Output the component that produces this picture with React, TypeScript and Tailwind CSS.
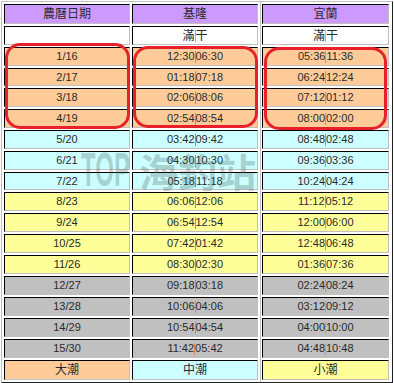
import React from 'react';

type Tone = 'head' | 'white' | 'big' | 'mid' | 'small' | 'dead';

const bg: Record<Tone, string> = {
  head: 'bg-[#cc99ff]',
  white: 'bg-white',
  big: 'bg-[#ffcc99]',
  mid: 'bg-[#ccffff]',
  small: 'bg-[#ffff99]',
  dead: 'bg-[#c0c0c0]',
};

const rows: { date: string; kl: string; yl: string; tone: Tone; h: string }[] = [
  { date: '1/16', kl: '12:30|06:30', yl: '05:36|11:36', tone: 'big', h: 'h-[19px]' },
  { date: '2/17', kl: '01:18|07:18', yl: '06:24|12:24', tone: 'big', h: 'h-[18px]' },
  { date: '3/18', kl: '02:06|08:06', yl: '07:12|01:12', tone: 'big', h: 'h-[19px]' },
  { date: '4/19', kl: '02:54|08:54', yl: '08:00|02:00', tone: 'big', h: 'h-[19px]' },
  { date: '5/20', kl: '03:42|09:42', yl: '08:48|02:48', tone: 'mid', h: 'h-[19px]' },
  { date: '6/21', kl: '04:30|10:30', yl: '09:36|03:36', tone: 'mid', h: 'h-[19px]' },
  { date: '7/22', kl: '05:18|11:18', yl: '10:24|04:24', tone: 'mid', h: 'h-[18px]' },
  { date: '8/23', kl: '06:06|12:06', yl: '11:12|05:12', tone: 'small', h: 'h-[19px]' },
  { date: '9/24', kl: '06:54|12:54', yl: '12:00|06:00', tone: 'small', h: 'h-[19px]' },
  { date: '10/25', kl: '07:42|01:42', yl: '12:48|06:48', tone: 'small', h: 'h-[19px]' },
  { date: '11/26', kl: '08:30|02:30', yl: '01:36|07:36', tone: 'small', h: 'h-[19px]' },
  { date: '12/27', kl: '09:18|03:18', yl: '02:24|08:24', tone: 'dead', h: 'h-[19px]' },
  { date: '13/28', kl: '10:06|04:06', yl: '03:12|09:12', tone: 'dead', h: 'h-[19px]' },
  { date: '14/29', kl: '10:54|04:54', yl: '04:00|10:00', tone: 'dead', h: 'h-[19px]' },
  { date: '15/30', kl: '11:42|05:42', yl: '04:48|10:48', tone: 'dead', h: 'h-[19px]' },
];

const Split: React.FC<{ text: string; bar: string }> = ({ text, bar }) => {
  const [a, b] = text.split('|');
  return (
    <span className="inline-flex items-center">
      {a}
      <span className={`inline-block w-[1px] h-[12px] ${bar}`} />
      {b}
    </span>
  );
};

const Cell: React.FC<{ tone: Tone; h: string; w?: string; cjk?: boolean; children?: React.ReactNode }> = ({
  tone,
  h,
  w = 'w-[126px]',
  cjk,
  children,
}) => (
  <div
    className={`${w} ${h} ${bg[tone]} ${cjk ? 'text-[12px]' : 'text-[11px]'} flex items-center justify-center border border-t-black border-l-black border-r-[#c0c0c0] border-b-[#c0c0c0] leading-none text-[#2a2a2a]`}
  >
    {children}
  </div>
);

const App: React.FC = () => {
  return (
    <div className="w-[394px] h-[383px] bg-white pt-[1px] pl-[1px]" style={{ fontFamily: '"Liberation Sans", Arial, "Noto Sans CJK TC", sans-serif' }}>
      <div className="relative w-[392px] h-[382px] border border-t-[#c0c0c0] border-l-[#c0c0c0] border-r-[#222] border-b-[#222] flex">
        {/* 農曆日期 + 基隆 */}
        <div className="w-[258px] pl-[2px] pr-[2px] pt-[2px] flex flex-col gap-[2px]">
          <div className="flex gap-[2px]">
            <Cell tone="head" h="h-[20px]" cjk>農曆日期</Cell>
            <Cell tone="head" h="h-[20px]" cjk>基隆</Cell>
          </div>
          <div className="flex gap-[2px]">
            <Cell tone="white" h="h-[19px]" />
            <Cell tone="white" h="h-[19px]" cjk>
              <Split text="滿|干" bar="bg-[#e8a060]" />
            </Cell>
          </div>
          {rows.map((r) => (
            <div key={r.date} className="flex gap-[2px]">
              <Cell tone={r.tone} h={r.h}>{r.date}</Cell>
              <Cell tone={r.tone} h={r.h}>
                <Split text={r.kl} bar="bg-[#d08a40]" />
              </Cell>
            </div>
          ))}
          <div className="flex gap-[2px]">
            <Cell tone="big" h="h-[20px]" cjk>大潮</Cell>
            <Cell tone="mid" h="h-[20px]" cjk>中潮</Cell>
          </div>
        </div>

        {/* 宜蘭 */}
        <div className="border-l border-[#c0c0c0] pl-[1px] pt-[2px] flex flex-col gap-[2px]">
          <Cell tone="head" h="h-[20px]" w="w-[127px]" cjk>宜蘭</Cell>
          <Cell tone="white" h="h-[19px]" w="w-[127px]" cjk>
            <Split text="滿|干" bar="bg-[#8fc0f0]" />
          </Cell>
          {rows.map((r) => (
            <Cell key={r.date} tone={r.tone} h={r.h} w="w-[127px]">
              <Split text={r.yl} bar="bg-[#7fa8d8]" />
            </Cell>
          ))}
          <Cell tone="small" h="h-[20px]" w="w-[127px]" cjk>小潮</Cell>
        </div>

        {/* watermark */}
        <div className="pointer-events-none absolute left-[79px] top-[144px] flex items-center font-bold text-[#4a6060]/30">
          <span className="inline-block w-[58px] text-[48px] leading-none scale-x-[0.5] origin-left">TOP</span>
          <span className="text-[39px] leading-none" style={{ fontFamily: '"Noto Sans CJK TC", sans-serif' }}>海釣站</span>
        </div>

        {/* red highlight boxes */}
        <div className="pointer-events-none absolute left-[3px] top-[41px] w-[125px] h-[86px] border-[3px] border-[#e8202a] rounded-[15px]" />
        <div className="pointer-events-none absolute left-[131px] top-[44px] w-[125px] h-[82px] border-[3px] border-[#e8202a] rounded-[15px]" />
        <div className="pointer-events-none absolute left-[262px] top-[45px] w-[123px] h-[83px] border-[3px] border-[#e8202a] rounded-[15px]" />
      </div>
    </div>
  );
};

export default App;
